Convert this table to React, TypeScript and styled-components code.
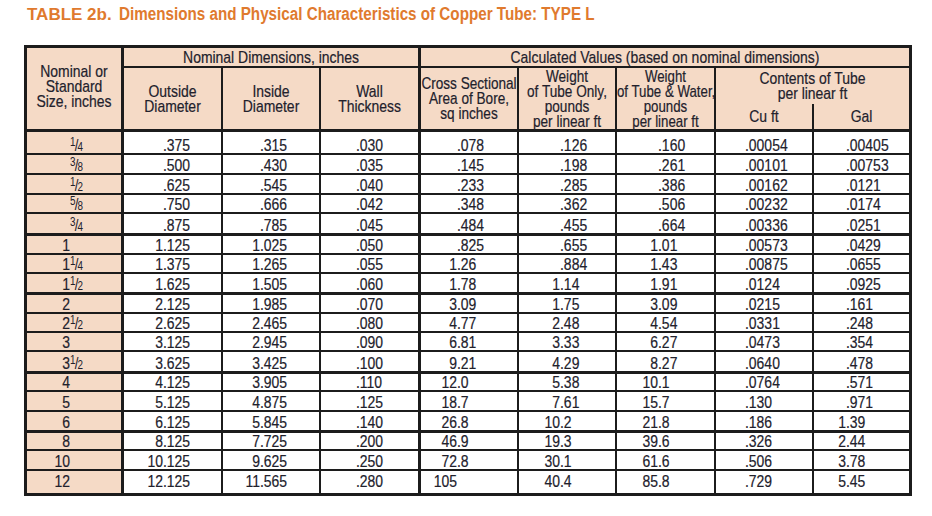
import React from 'react';
import styled, { createGlobalStyle } from 'styled-components';

const FONT = `'Liberation Sans', Arial, Helvetica, sans-serif`;
const LINE = '#1c1c1c';
const PEACH = '#f5dac6';
const INK = '#22212c';
const NARROW = 0.82;

const GlobalStyle = createGlobalStyle`
  html, body { margin: 0; padding: 0; background: #fff; }
  body { font-family: ${FONT}; color: ${INK}; }
`;

const Page = styled.div`
  box-sizing: border-box;
  width: 932px;
  height: 516px;
  padding: 4px 0 0 24px;
  overflow: hidden;
`;

const Title = styled.h1`
  display: flex;
  align-items: baseline;
  margin: 0 0 20px 3px;
  font-family: ${FONT};
  font-weight: 700;
  line-height: 20px;
  color: #e07a2e;
  white-space: nowrap;
`;

const TitleLead = styled.span`
  font-size: 17px;
  margin-right: 7px;
`;

const TitleRest = styled.span`
  display: inline-block;
  font-size: 18px;
  transform: scaleX(0.845);
  transform-origin: 0 0;
`;

const Table = styled.table`
  box-sizing: border-box;
  width: 888px;
  table-layout: fixed;
  border-collapse: separate;
  border-spacing: 0;
  border: 3px solid ${LINE};
  font-family: ${FONT};
  font-size: 17px;
  line-height: 15px;
  color: ${INK};
  -webkit-text-stroke: 0.2px ${INK};
`;

const Col = styled.col<{ $w: number }>`
  width: ${(p) => p.$w}px;
`;

const Row = styled.tr<{ $h: number }>`
  height: ${(p) => p.$h}px;
`;

type Edge = 0 | 2 | 3;

const HeadCell = styled.th<{ $r?: Edge; $b?: Edge; $pb?: number }>`
  box-sizing: border-box;
  padding: 0 0 ${(p) => p.$pb ?? 0}px;
  background: ${PEACH};
  font-weight: 400;
  vertical-align: middle;
  white-space: nowrap;
  border-right: ${(p) => p.$r ?? 0}px solid ${LINE};
  border-bottom: ${(p) => p.$b ?? 0}px solid ${LINE};
`;

const DataCell = styled.td<{ $r: Edge; $b: Edge; $pb: number; $peach?: boolean }>`
  box-sizing: border-box;
  padding: 0 0 ${(p) => p.$pb}px;
  vertical-align: bottom;
  white-space: nowrap;
  background: ${(p) => (p.$peach ? PEACH : '#fff')};
  border-right: ${(p) => p.$r}px solid ${LINE};
  border-bottom: ${(p) => p.$b}px solid ${LINE};
`;

/* Condensed type: the text block is laid out wider and narrowed back to the cell width */
const Squeeze = styled.div<{ $align: 'left' | 'center'; $k: number }>`
  width: ${(p) => 100 / p.$k}%;
  transform: scaleX(${(p) => p.$k});
  transform-origin: 0 0;
  text-align: ${(p) => p.$align};
`;

const IntPart = styled.span<{ $w: number }>`
  display: inline-block;
  width: ${(p) => p.$w / NARROW}px;
  text-align: right;
`;

const FracNum = styled.span`
  font-size: 12px;
  line-height: 0;
  vertical-align: 5px;
  -webkit-text-stroke: 0;
`;

const FracSlash = styled.span`
  font-size: 16px;
  line-height: 0;
  margin: 0 -1px;
  -webkit-text-stroke: 0;
`;

const FracDen = styled.span`
  font-size: 12px;
  line-height: 0;
  -webkit-text-stroke: 0;
`;

const COL_W = [97, 99, 98, 100, 98, 98, 99, 98, 95];
const COL_R: Edge[] = [3, 2, 2, 3, 2, 2, 2, 2, 0];
const COL_DX = [43, 39, 37, 35, 36, 41, 41, 29, 32];

type RowData = { w: string; n?: string; d?: string; v: string[]; h: number; b: Edge; pb?: number };

const ROWS: RowData[] = [
  { w: '', n: '1', d: '4', v: ['.375', '.315', '.030', '.078', '.126', '.160', '.00054', '.00405'], h: 23, b: 2 },
  { w: '', n: '3', d: '8', v: ['.500', '.430', '.035', '.145', '.198', '.261', '.00101', '.00753'], h: 20, b: 2 },
  { w: '', n: '1', d: '2', v: ['.625', '.545', '.040', '.233', '.285', '.386', '.00162', '.0121'], h: 20, b: 2 },
  { w: '', n: '5', d: '8', v: ['.750', '.666', '.042', '.348', '.362', '.506', '.00232', '.0174'], h: 19, b: 2 },
  { w: '', n: '3', d: '4', v: ['.875', '.785', '.045', '.484', '.455', '.664', '.00336', '.0251'], h: 22, b: 3 },
  { w: '1', v: ['1.125', '1.025', '.050', '.825', '.655', '1.01', '.00573', '.0429'], h: 19, b: 2 },
  { w: '1', n: '1', d: '4', v: ['1.375', '1.265', '.055', '1.26', '.884', '1.43', '.00875', '.0655'], h: 19, b: 2 },
  { w: '1', n: '1', d: '2', v: ['1.625', '1.505', '.060', '1.78', '1.14', '1.91', '.0124', '.0925'], h: 21, b: 3 },
  { w: '2', v: ['2.125', '1.985', '.070', '3.09', '1.75', '3.09', '.0215', '.161'], h: 19, b: 2 },
  { w: '2', n: '1', d: '2', v: ['2.625', '2.465', '.080', '4.77', '2.48', '4.54', '.0331', '.248'], h: 19, b: 2 },
  { w: '3', v: ['3.125', '2.945', '.090', '6.81', '3.33', '6.27', '.0473', '.354'], h: 19, b: 2 },
  { w: '3', n: '1', d: '2', v: ['3.625', '3.425', '.100', '9.21', '4.29', '8.27', '.0640', '.478'], h: 22, b: 3 },
  { w: '4', v: ['4.125', '3.905', '.110', '12.0', '5.38', '10.1', '.0764', '.571'], h: 18, b: 2 },
  { w: '5', v: ['5.125', '4.875', '.125', '18.7', '7.61', '15.7', '.130', '.971'], h: 20, b: 2 },
  { w: '6', v: ['6.125', '5.845', '.140', '26.8', '10.2', '21.8', '.186', '1.39'], h: 21, b: 3 },
  { w: '8', v: ['8.125', '7.725', '.200', '46.9', '19.3', '39.6', '.326', '2.44'], h: 18, b: 2 },
  { w: '10', v: ['10.125', '9.625', '.250', '72.8', '30.1', '61.6', '.506', '3.78'], h: 20, b: 2 },
  { w: '12', v: ['12.125', '11.565', '.280', '105', '40.4', '85.8', '.729', '5.45'], h: 22, b: 0, pb: 4 },
];

function splitDecimal(value: string): [string, string] {
  const i = value.indexOf('.');
  if (i < 0) return [value, ''];
  return [value.slice(0, i), value.slice(i)];
}

const SizeValue: React.FC<{ r: RowData }> = ({ r }) => (
  <Squeeze $align="left" $k={NARROW}>
    <IntPart $w={COL_DX[0]}>{r.w}</IntPart>
    {r.n && (
      <>
        <FracNum>{r.n}</FracNum>
        <FracSlash>/</FracSlash>
        <FracDen>{r.d}</FracDen>
      </>
    )}
  </Squeeze>
);

const NumValue: React.FC<{ value: string; dx: number }> = ({ value, dx }) => {
  const [a, b] = splitDecimal(value);
  return (
    <Squeeze $align="left" $k={NARROW}>
      <IntPart $w={dx}>{a}</IntPart>
      {b}
    </Squeeze>
  );
};

const HeadText: React.FC<{ lines: string[]; k?: number }> = ({ lines, k = NARROW }) => (
  <Squeeze $align="center" $k={k}>
    {lines.map((l, i) => (
      <React.Fragment key={i}>
        {i > 0 && <br />}
        {l}
      </React.Fragment>
    ))}
  </Squeeze>
);

export default function App() {
  return (
    <>
      <GlobalStyle />
      <Page>
        <Title>
          <TitleLead>TABLE 2b.</TitleLead>
          <TitleRest>Dimensions and Physical Characteristics of Copper Tube: TYPE L</TitleRest>
        </Title>
        <Table>
          <colgroup>
            {COL_W.map((w, i) => (
              <Col key={i} $w={w} />
            ))}
          </colgroup>
          <thead>
            <Row $h={20}>
              <HeadCell rowSpan={3} $r={3} $b={3} $pb={5}>
                <HeadText lines={['Nominal or', 'Standard', 'Size, inches']} />
              </HeadCell>
              <HeadCell colSpan={3} $r={3} $b={2}>
                <HeadText lines={['Nominal Dimensions, inches']} />
              </HeadCell>
              <HeadCell colSpan={5} $b={2}>
                <HeadText lines={['Calculated Values (based on nominal dimensions)']} />
              </HeadCell>
            </Row>
            <Row $h={36}>
              <HeadCell rowSpan={2} $r={2} $b={3}>
                <HeadText lines={['Outside', 'Diameter']} />
              </HeadCell>
              <HeadCell rowSpan={2} $r={2} $b={3}>
                <HeadText lines={['Inside', 'Diameter']} />
              </HeadCell>
              <HeadCell rowSpan={2} $r={3} $b={3}>
                <HeadText lines={['Wall', 'Thickness']} />
              </HeadCell>
              <HeadCell rowSpan={2} $r={2} $b={3}>
                <HeadText lines={['Cross Sectional', 'Area of Bore,', 'sq inches']} k={0.8} />
              </HeadCell>
              <HeadCell rowSpan={2} $r={2} $b={3}>
                <HeadText lines={['Weight', 'of Tube Only,', 'pounds', 'per linear ft']} k={0.8} />
              </HeadCell>
              <HeadCell rowSpan={2} $r={2} $b={3}>
                <HeadText lines={['Weight', 'of Tube & Water,', 'pounds', 'per linear ft']} k={0.78} />
              </HeadCell>
              <HeadCell colSpan={2}>
                <HeadText lines={['Contents of Tube', 'per linear ft']} />
              </HeadCell>
            </Row>
            <Row $h={28}>
              <HeadCell $r={2} $b={3}>
                <HeadText lines={['Cu ft']} />
              </HeadCell>
              <HeadCell $b={3}>
                <HeadText lines={['Gal']} />
              </HeadCell>
            </Row>
          </thead>
          <tbody>
            {ROWS.map((r, ri) => (
              <Row key={ri} $h={r.h}>
                <DataCell $peach $r={COL_R[0]} $b={r.b} $pb={r.pb ?? 0}>
                  <SizeValue r={r} />
                </DataCell>
                {r.v.map((val, ci) => (
                  <DataCell key={ci} $r={COL_R[ci + 1]} $b={r.b} $pb={r.pb ?? 0}>
                    <NumValue value={val} dx={COL_DX[ci + 1]} />
                  </DataCell>
                ))}
              </Row>
            ))}
          </tbody>
        </Table>
      </Page>
    </>
  );
}
